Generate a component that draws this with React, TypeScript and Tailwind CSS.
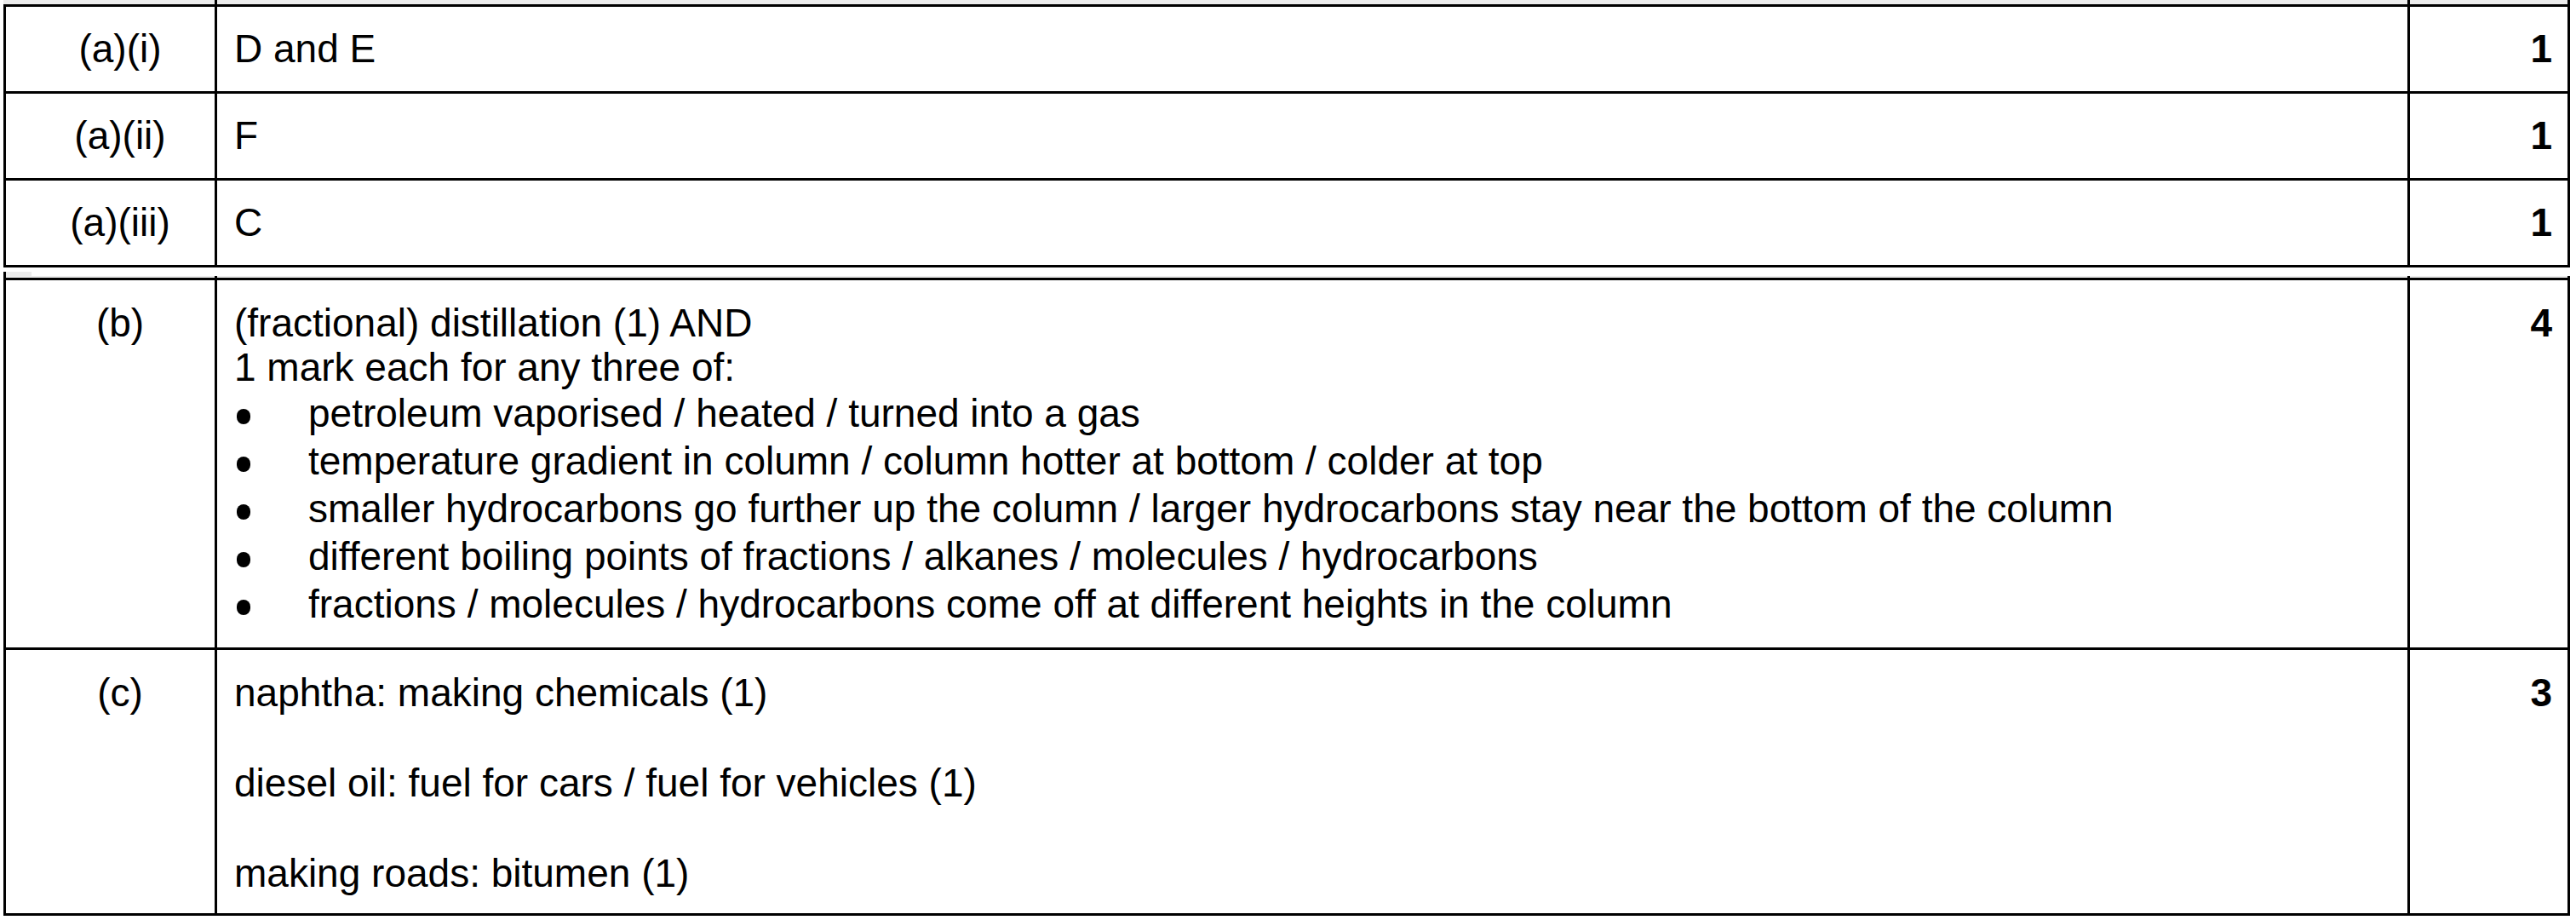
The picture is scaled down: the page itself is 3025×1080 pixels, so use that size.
const cols = "grid grid-cols-[245px_2575px_188px]";

const partA = [
  { label: "(a)(i)", answer: "D and E", mark: "1" },
  { label: "(a)(ii)", answer: "F", mark: "1" },
  { label: "(a)(iii)", answer: "C", mark: "1" },
];

const bullets = [
  "petroleum vaporised / heated / turned into a gas",
  "temperature gradient in column / column hotter at bottom / colder at top",
  "smaller hydrocarbons go further up the column / larger hydrocarbons stay near the bottom of the column",
  "different boiling points of fractions / alkanes / molecules / hydrocarbons",
  "fractions / molecules / hydrocarbons come off at different heights in the column",
];

const partC = [
  "naphtha: making chemicals (1)",
  "diesel oil: fuel for cars / fuel for vehicles (1)",
  "making roads: bitumen (1)",
];

export default function App() {
  return (
    <div className="w-[3025px] h-[1080px] overflow-hidden bg-white text-black font-['Liberation_Sans',Arial,sans-serif] text-[46px]">
      {/* bottom edge of the table above */}
      <div className={`${cols} ml-[4px] w-[3014px] h-[5px] bg-[#ececec] border-x-[3px] border-l-[#ececec] border-r-black`}>
        <div />
        <div className="border-l-[3px] border-black" />
        <div className="border-l-[3px] border-black" />
      </div>

      {/* part (a) */}
      <div className="ml-[4px] w-[3014px] border-x-[3px] border-b-[3px] border-black">
        {partA.map((row) => (
          <div key={row.label} className={`${cols} h-[102px] border-t-[3px] border-black`}>
            <div className="flex items-center justify-center pl-[23px]">{row.label}</div>
            <div className="flex items-center border-l-[3px] border-black pl-[20px]">{row.answer}</div>
            <div className="flex items-center justify-end border-l-[3px] border-black pr-[18px] font-bold">
              {row.mark}
            </div>
          </div>
        ))}
      </div>

      {/* page break between the tables */}
      <div className="mt-[5px] ml-[4px] h-[5px] border-l-[3px] border-black">
        <div className="h-full w-[30px] bg-[#ececec]" />
      </div>
      <div className={`${cols} ml-[4px] w-[3014px] h-[2px] bg-[#ececec] border-x-[3px] border-black`}>
        <div />
        <div className="border-l-[3px] border-black" />
        <div className="border-l-[3px] border-black" />
      </div>

      {/* parts (b) and (c) */}
      <div className="ml-[4px] w-[3014px] border-x-[3px] border-b-[3px] border-black">
        <div className={`${cols} h-[434px] border-t-[3px] border-black`}>
          <div className="pt-[24px] pl-[23px] text-center leading-[52px]">(b)</div>
          <div className="border-l-[3px] border-black pt-[24px] pl-[20px]">
            <p className="leading-[52px]">(fractional) distillation (1) AND</p>
            <p className="leading-[52px]">1 mark each for any three of:</p>
            <ul>
              {bullets.map((b) => (
                <li key={b} className="flex leading-[56px]">
                  <span className="w-[87px] shrink-0 pt-[23px] pl-[3px]">
                    <span className="block h-[18px] w-[16px] rounded-full bg-black" />
                  </span>
                  <span>{b}</span>
                </li>
              ))}
            </ul>
          </div>
          <div className="border-l-[3px] border-black pt-[24px] pr-[18px] text-right font-bold leading-[52px]">4</div>
        </div>

        <div className={`${cols} h-[312px] border-t-[3px] border-black`}>
          <div className="pt-[24px] pl-[23px] text-center leading-[53px]">(c)</div>
          <div className="border-l-[3px] border-black pt-[24px] pl-[20px] leading-[53px]">
            {partC.map((line, i) => (
              <p key={line} className={i > 0 ? "mt-[53px]" : ""}>
                {line}
              </p>
            ))}
          </div>
          <div className="border-l-[3px] border-black pt-[24px] pr-[18px] text-right font-bold leading-[53px]">3</div>
        </div>
      </div>
    </div>
  );
}
